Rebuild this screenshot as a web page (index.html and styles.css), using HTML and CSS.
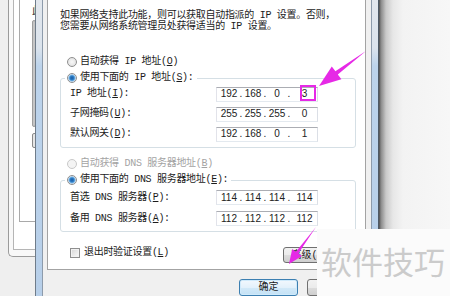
FILE: index.html
```html
<!DOCTYPE html>
<html lang="zh-CN">

<head>
  <meta charset="UTF-8">
  <title>Internet 协议版本 4 (TCP/IPv4) 属性</title>
  <link rel="stylesheet" href="styles.css">
</head>

<body>

  <div class="screen">
    <!-- 后面那个被挡住的窗口 -->
    <div class="back-win">
      <div class="bw-outer">
        <div class="bw-mid">
          <div class="bw-inner">
            <span class="bw-text">此</span>
            <div class="bw-thumb"></div>
            <div class="bw-knob"></div>
          </div>
        </div>
      </div>
    </div>

    <div class="dialog">
      <div class="frame frame-left"></div>
      <div class="client">
        <div class="tab-page">
          <p class="intro">如果网络支持此功能，则可以获取自动指派的 IP 设置。否则，<br>您需要从网络系统管理员处获得适当的 IP 设置。</p>

          <div class="option ip-auto"><span class="radio"></span>自动获得 IP 地址(<u>O</u>)</div>
          <fieldset class="group">
            <legend><span class="option"><span class="radio checked"></span>使用下面的 IP 地址(<u>S</u>):</span></legend>
            <div class="row">
              <span class="label">IP 地址(<u>I</u>):</span>
              <span class="ip-box"><span class="oct">192</span><span class="dot">.</span><span class="oct">168</span><span class="dot">.</span><span class="oct">0</span><span class="dot">.</span><span class="oct last">3</span></span>
            </div>
            <div class="row">
              <span class="label">子网掩码(<u>U</u>):</span>
              <span class="ip-box"><span class="oct">255</span><span class="dot">.</span><span class="oct">255</span><span class="dot">.</span><span class="oct">255</span><span class="dot">.</span><span class="oct last">0</span></span>
            </div>
            <div class="row">
              <span class="label">默认网关(<u>D</u>):</span>
              <span class="ip-box"><span class="oct">192</span><span class="dot">.</span><span class="oct">168</span><span class="dot">.</span><span class="oct">0</span><span class="dot">.</span><span class="oct last">1</span></span>
            </div>
          </fieldset>

          <div class="option dns-auto disabled"><span class="radio"></span>自动获得 DNS 服务器地址(<u>B</u>)</div>
          <fieldset class="group dns">
            <legend><span class="option"><span class="radio checked"></span>使用下面的 DNS 服务器地址(<u>E</u>):</span></legend>
            <div class="row">
              <span class="label">首选 DNS 服务器(<u>P</u>):</span>
              <span class="ip-box"><span class="oct">114</span><span class="dot">.</span><span class="oct">114</span><span class="dot">.</span><span class="oct">114</span><span class="dot">.</span><span class="oct last">114</span></span>
            </div>
            <div class="row">
              <span class="label">备用 DNS 服务器(<u>A</u>):</span>
              <span class="ip-box"><span class="oct">112</span><span class="dot">.</span><span class="oct">112</span><span class="dot">.</span><span class="oct">112</span><span class="dot">.</span><span class="oct last">112</span></span>
            </div>
          </fieldset>

          <div class="check-row">
            <span class="check"></span>
            <span>退出时验证设置(<u>L</u>)</span>
            <button class="btn btn-adv">高级(<u>V</u>)...</button>
          </div>
        </div>

        <div class="buttons">
          <button class="btn btn-default">确定</button>
          <button class="btn">取消</button>
        </div>
      </div>
      <div class="frame frame-right"></div>
    </div>

    <div class="shadow"></div>
  </div>

  <!-- 标注：粉色箭头和方框 -->
  <svg class="marks" width="450" height="296" viewBox="0 0 450 296">
    <rect x="301" y="86" width="14" height="14" fill="none" stroke="#e629e6" stroke-width="2" />
    <polygon points="366,51 337.8,74.4 341.4,79.2 319,86 331.8,66.4 335.4,71.2" fill="#e629e6" />
    <polygon points="316,227 298.3,253.5 302,256 289,264 292.2,249.1 295.9,251.7" fill="#e629e6" />
  </svg>

  <div class="watermark">软件技巧</div>

</body>

</html>
```

FILE: styles.css
```css
* {
  margin: 0;
  padding: 0;
  box-sizing: border-box;
}

html,
body {
  width: 450px;
  height: 296px;
  overflow: hidden;
}

body {
  position: relative;
  background-color: #f6f6f6;
  color: #1b1b1b;
  font: 10px/12px "Liberation Mono", "Noto Sans CJK SC", monospace;
  letter-spacing: -0.3px;
}

.screen {
  display: flex;
  height: 296px;
}

/* 左边露出来的后面窗口 */
.back-win {
  width: 35px;
  flex: none;
  padding-left: 8px;
  background-color: #efefef;
  overflow: hidden;
}

.bw-outer {
  height: 257px;
  padding-left: 4px;
  background-color: #f8f8f8;
  border-left: 1px solid #9b9b9b;
  border-bottom: 1px solid #9b9b9b;
  border-bottom-left-radius: 5px;
}

.bw-mid {
  height: 250px;
  padding-left: 5px;
  background-color: #fff;
  border-left: 1px solid #b5b5b5;
  border-bottom: 1px solid #b5b5b5;
}

.bw-inner {
  height: 222px;
  padding: 6px 0 0 12px;
  border-left: 1px solid #a9a9a9;
  border-bottom: 1px solid #a9a9a9;
  white-space: nowrap;
}

.bw-text {
  display: block;
  height: 12px;
  color: #222;
}

.bw-thumb {
  width: 4px;
  height: 107px;
  margin-top: 2px;
  background-color: #c6c6c6;
  border: 1px solid #9e9e9e;
  border-radius: 2px;
}

.bw-knob {
  width: 5px;
  height: 15px;
  margin-top: 6px;
  border: 1px solid #8a8a8a;
  border-radius: 2px;
  background-color: #e6e6e6;
}

/* 前面的对话框 */
.dialog {
  width: 344px;
  flex: none;
  display: flex;
}

.frame {
  width: 8px;
  flex: none;
  background: linear-gradient(#e2e7ed, #dbe3ec 48px, #bcd3eb 66px, #b7cfe9);
}

.frame-left {
  border-left: 1px solid #6f7c8a;
  border-right: 1px solid #8d9bab;
}

.frame-right {
  border-left: 1px solid #8d9bab;
  border-right: 1px solid #4d5966;
}

.client {
  flex: 1;
  display: flex;
  flex-direction: column;
  padding: 0 5px 0 4px;
  background-color: #f0f0f0;
}

.tab-page {
  height: 273px;
  padding: 10px 9px 0 12px;
  background-color: #fff;
  border: 1px solid #a3a3a3;
  border-top: 0;
}

.intro {
  line-height: 11px;
  white-space: nowrap;
}

.option {
  display: flex;
  align-items: center;
  height: 12px;
  padding-left: 7px;
  white-space: nowrap;
}

.option.ip-auto {
  margin-top: 24px;
}

.option.dns-auto {
  margin-top: 10px;
}

.option.disabled {
  color: #a3a3a3;
}

.radio {
  flex: none;
  width: 10px;
  height: 10px;
  margin-right: 3px;
  border: 1px solid #8f8f8f;
  border-radius: 50%;
  background: radial-gradient(circle, #f8f8f8 0, #dfdfdf 5px);
}

.radio.checked {
  background: radial-gradient(circle, #1c5aa0 0, #2d7ec8 2px, #7ab6e6 3px, #e8eef4 4px);
}

.disabled .radio {
  border-color: #c9c9c9;
  background: #f4f4f4;
}

.group {
  width: 296px;
  margin-top: 4px;
  padding: 0 0 3px;
  border: 1px solid #d5dfe5;
  border-radius: 3px;
}

.group legend {
  margin-left: 4px;
  padding: 0 3px 0 0;
}

.group legend .option {
  padding-left: 2px;
}

.row {
  display: flex;
  align-items: center;
  height: 20px;
  padding-left: 9px;
}

.group.dns {
  padding: 1px 0 2px;
}

.group.dns .row {
  height: 21px;
}

.label {
  width: 146px;
  flex: none;
  white-space: nowrap;
}

.ip-box {
  display: flex;
  align-items: center;
  width: 102px;
  height: 15px;
  padding-left: 3px;
  border: 1px solid;
  border-color: #abadb3 #dbdfe6 #e3e9ef #e2e3ea;
  font-family: "Liberation Sans", sans-serif;
  font-size: 10px;
  letter-spacing: 0;
  color: #222;
}

.oct {
  width: 18px;
  text-align: center;
}

.oct.last {
  flex: 1;
}

.dot {
  width: 6px;
  text-align: center;
}

.check-row {
  display: flex;
  align-items: flex-start;
  height: 16px;
  margin-top: 15px;
  padding-left: 10px;
  white-space: nowrap;
}

.check {
  flex: none;
  width: 10px;
  height: 10px;
  margin: 1px 4px 0 0;
  border: 1px solid #8f8f8f;
  background: linear-gradient(135deg, #d6d6d6, #fbfbfb);
  box-shadow: inset 0 0 0 1px #f2f2f2;
}

.btn {
  height: 17px;
  width: 59px;
  border: 1px solid #707070;
  border-radius: 3px;
  background: linear-gradient(#f2f2f2, #ebebeb 50%, #dddddd 50%, #cfcfcf);
  font: 10px/13px "Liberation Mono", "Noto Sans CJK SC", monospace;
  color: #1b1b1b;
}

.btn-adv {
  width: 73px;
  height: 16px;
  margin-left: auto;
}

.buttons {
  display: flex;
  justify-content: flex-end;
  gap: 9px;
  padding-top: 9px;
}

.btn-default {
  border-color: #3c7fb1;
  background: linear-gradient(#f2f8fd, #e3f1fb 50%, #d2e9f8 50%, #c4e2f6);
  box-shadow: inset 0 0 0 1px #cfeafb;
}

.shadow {
  flex: 1;
  background: linear-gradient(to right, #505050 0, #8a8a8a 2px, #c9c9c9 7px, #e7e7e7 14px, #f3f3f3 24px, #f7f7f7);
}

/* 标注层 */
.marks {
  position: absolute;
  left: 0;
  top: 0;
}

.watermark {
  position: absolute;
  left: 317px;
  top: 229px;
  right: 0;
  bottom: 0;
  padding: 16px 0 0 4px;
  background-color: #fbfbfb;
  color: #cbcbcb;
  font: 31px/31px "Noto Sans CJK SC", sans-serif;
  letter-spacing: 0;
  white-space: nowrap;
}
```
